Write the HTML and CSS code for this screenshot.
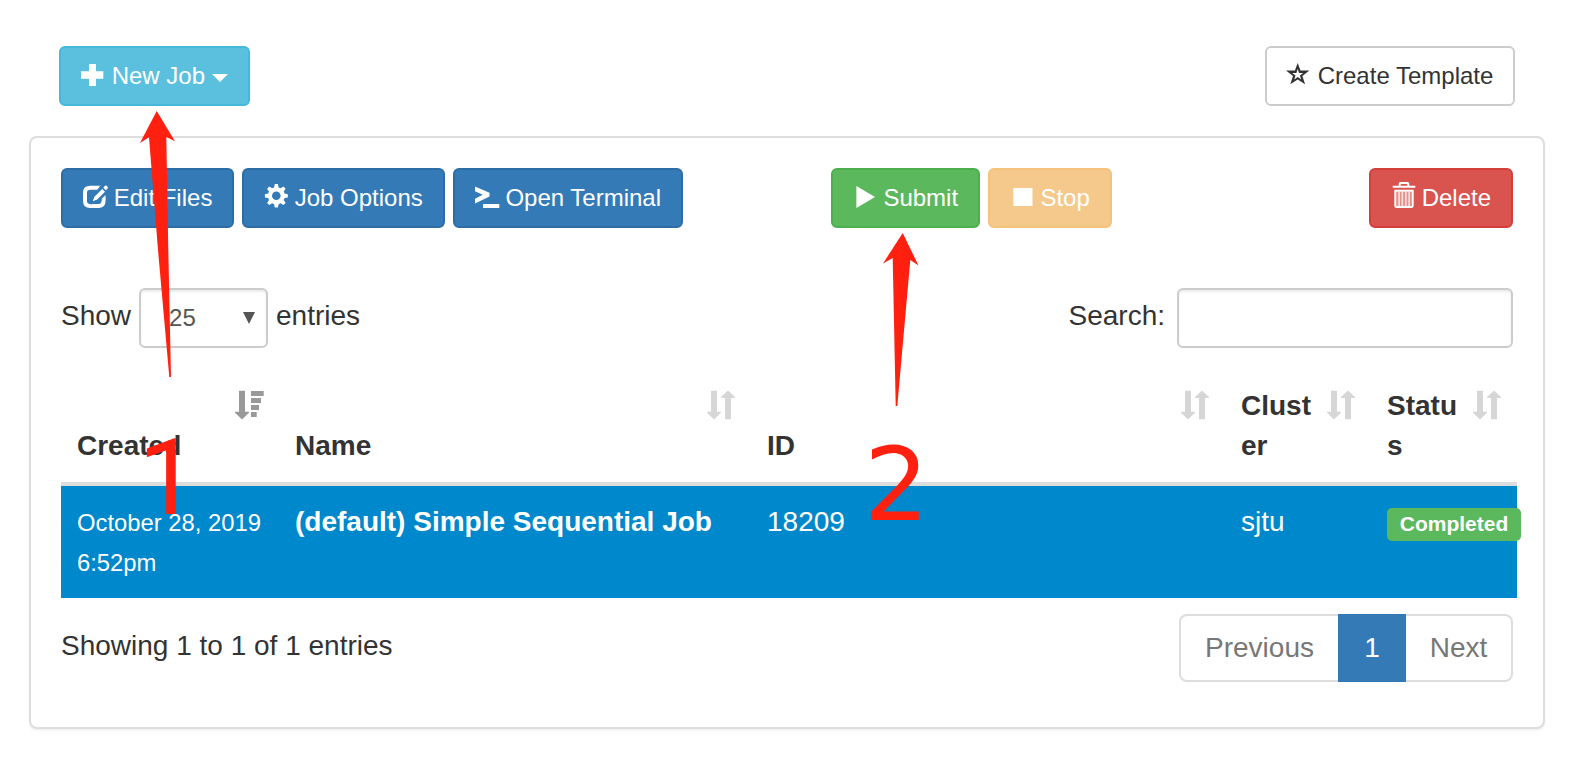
FILE: index.html
```html
<!DOCTYPE html>
<html lang="en">
<head>
<meta charset="utf-8">
<title>Jobs</title>
<link rel="stylesheet" href="styles.css">
</head>
<body>
<main class="page">
  <div class="topbar">
    <button class="btn btn-info new-job"><svg class="icon" viewBox="0 0 24 24"><path d="M8 0h7v7.300h7.300v7.400H15V22H8v-7.300H0V7.300h8z"/></svg><span>New Job</span><i class="caret"></i></button>
    <button class="btn btn-default create-template"><svg class="icon" viewBox="0 0 24 24"><path fill-rule="evenodd" d="M10.700-1L13.500 6.600H22.400L15.400 12 18.100 20.300 10.700 15.600 3.300 20.300 6 12-1 6.600H7.900zM10.700 5L12 9H16.200L12.900 11.600 14.200 15.400 10.700 13.100 7.200 15.400 8.500 11.600 5.200 9H9.400z"/></svg><span>Create Template</span></button>
  </div>

  <section class="panel">
    <div class="toolbar">
      <button class="btn btn-primary edit-files"><svg class="icon" viewBox="0 0 24 24"><path d="M18.500 1.700H7Q2 1.700 2 6.700v8.300q0 5 5 5h8.500q5 0 5-5v-3" fill="none" stroke="currentColor" stroke-width="4"/><path fill="#337ab7" d="M17.300-.400h7v9l-1.800 2-6.500 6.400-8.500 1.500 1-6.500z"/><path d="M9.800 15.300l1.600-4.500 7.800-7.800 2.800 2.800-7.800 7.800zM20.300 1.700l1.700-1.900q.8-.8 1.600 0l1 1.100q.8.800 0 1.600l-1.700 1.700z"/><path d="M18.500 13l4-4v4.500h-4z"/></svg><span>Edit Files</span></button>
      <button class="btn btn-primary job-options"><svg class="icon" viewBox="0 0 24 24"><path fill-rule="evenodd" d="M10.800-2h3.100l.7 3.400 2 .9 2.900-1.800 2.100 2.200-1.900 2.800.9 2 3.200.7v3.200l-3.200.7-.9 2 1.900 2.800-2.100 2.200-2.900-1.800-2 .9-.7 3.400h-3.100l-.7-3.400-2-.9-2.900 1.800-2.100-2.200L5 14.100l-.9-2-3.200-.7V8.200l3.200-.7.9-2-1.900-2.800L5.200.500l2.900 1.800 2-.9zM12.300 5.500a4.300 4.300 0 100 8.600 4.300 4.300 0 000-8.600z"/></svg><span>Job Options</span></button>
      <button class="btn btn-primary open-terminal"><svg class="icon" viewBox="0 0 24 24"><path d="M0 .600l14.500 6.200v3.800L0 17.500v-4.800l7.700-3.900L0 5.300zM8 18h16.300v4H8z"/></svg><span>Open Terminal</span></button>
      <button class="btn btn-success submit"><svg class="icon" viewBox="0 0 24 24"><path d="M3.400 0L22 11 3.400 22z"/></svg><span>Submit</span></button>
      <button class="btn btn-warning stop"><svg class="icon" viewBox="0 0 24 24"><path d="M3.300 2h19.200v18H3.300z"/></svg><span>Stop</span></button>
      <button class="btn btn-danger delete"><svg class="icon" viewBox="0 0 24 24"><path fill-rule="evenodd" d="M7.700-.300v-2Q7.700-4 9.300-4h7.400q1.600 0 1.600 1.700v2h6v2H1.700v-2zM9.700-2v1.700h6.600V-2zM3.300 3.700h19.400v16.100q0 2.200-2.200 2.200h-15q-2.200 0-2.200-2.200zM5.300 5.700V20h15.400V5.700z"/><path fill-opacity=".35" d="M5.300 5.700h15.400V20H5.300z"/><path fill-opacity=".7" d="M7.300 5.700H9V20H7.300zM10.500 5.700h1.700V20h-1.700zM14 5.700h1.700V20H14zM17.300 5.700H19V20h-1.700z"/></svg><span>Delete</span></button>
    </div>

    <div class="filters">
      <span class="label-text">Show</span>
      <div class="field select"><span>25</span><svg class="select-arrow" viewBox="0 0 12 12"><path d="M0 0h12L6 12z"/></svg></div>
      <span class="label-text">entries</span>
      <label class="label-text search-label" for="search">Search:</label>
      <input class="field search" id="search" type="text">
    </div>

    <table class="jobs">
      <colgroup><col class="c-created"><col class="c-name"><col class="c-id"><col class="c-cluster"><col class="c-status"></colgroup>
      <thead>
        <tr>
          <th>Created<svg class="sort active" viewBox="0 0 28 30"><path d="M4 .700h6V21.700h4v1L7 29.500 0 22.700v-1h4zM16 1h12.700v5H16zM16 8h10v5H16zM16 15h8v5h-8zM16 22h5.700v5H16z"/></svg></th>
          <th>Name<svg class="sort" viewBox="0 0 28 30"><path d="M4 .700h6V21.700h4v1L7 29.500 0 22.700v-1h4zM21 .500l7 6.600v1h-4V29.300h-6V8.100h-4v-1z"/></svg></th>
          <th>ID<svg class="sort" viewBox="0 0 28 30"><path d="M4 .700h6V21.700h4v1L7 29.500 0 22.700v-1h4zM21 .500l7 6.600v1h-4V29.300h-6V8.100h-4v-1z"/></svg></th>
          <th>Cluster<svg class="sort" viewBox="0 0 28 30"><path d="M4 .700h6V21.700h4v1L7 29.500 0 22.700v-1h4zM21 .500l7 6.600v1h-4V29.300h-6V8.100h-4v-1z"/></svg></th>
          <th>Status<svg class="sort" viewBox="0 0 28 30"><path d="M4 .700h6V21.700h4v1L7 29.500 0 22.700v-1h4zM21 .500l7 6.600v1h-4V29.300h-6V8.100h-4v-1z"/></svg></th>
        </tr>
      </thead>
      <tbody>
        <tr>
          <td class="date">October 28, 2019 6:52pm</td>
          <td class="name">(default) Simple Sequential Job</td>
          <td>18209</td>
          <td>sjtu</td>
          <td class="status"><span class="badge">Completed</span></td>
        </tr>
      </tbody>
    </table>

    <div class="footer">
      <span class="info">Showing 1 to 1 of 1 entries</span>
      <nav class="pagination"><a class="prev">Previous</a><a class="current">1</a><a class="next">Next</a></nav>
    </div>
  </section>
</main>

<svg class="arrows" viewBox="0 0 1579 764">
  <path d="M156.700 111L175 141.200l-8.700-4.200 2 113 2.700 127h-1.700L158 250l-9-112.700-9 5.700z"/>
  <path d="M902.700 233l15.800 32.500-8.200-5.500-13 146h-1.600l-3-148-9.700 5.500z"/>
</svg>
<span class="step step-one">1</span>
<span class="step step-two">2</span>
</body>
</html>
```
FILE: styles.css
```css
* { box-sizing: border-box; }

body {
  margin: 0;
  background: #fff;
  color: #333;
  font: 28px/40px "Liberation Sans", Arial, sans-serif;
}

.page {
  position: relative;
  width: 1579px;
  height: 764px;
  padding: 46px 34px 0 29px;
  overflow: hidden;
}

.topbar {
  display: flex;
  justify-content: space-between;
  padding: 0 30px;
  margin-bottom: 30px;
}

.btn {
  display: flex;
  align-items: center;
  height: 60px;
  padding: 0 0 0 20px;
  border: 2px solid;
  border-radius: 6px;
  color: #fff;
  font: 24px/36px "Liberation Sans", Arial, sans-serif;
  white-space: nowrap;
}

.icon {
  flex: none;
  width: 24px;
  height: 24px;
  margin-right: 6.7px;
  overflow: visible;
  fill: currentColor;
}

.open-terminal .icon,
.submit .icon,
.stop .icon { margin-right: 6.4px; }

.btn-info { background: #5bc0de; border-color: #46b8da; }
.btn-default { background: #fff; border-color: #ccc; color: #333; }
.btn-primary { background: #337ab7; border-color: #2e6da4; }
.btn-success { background: #5cb85c; border-color: #4cae4c; }
.btn-warning { background: #f0ad4e; border-color: #eea236; opacity: .65; }
.btn-danger { background: #d9534f; border-color: #d43f3a; }

.caret {
  margin: 3px 0 0 7px;
  border-top: 8px solid;
  border-right: 8px solid transparent;
  border-left: 8px solid transparent;
}

.new-job { width: 191px; }
.create-template { width: 250px; }
.edit-files { width: 173px; }
.job-options { width: 203px; }
.open-terminal { width: 230px; }
.submit { width: 149px; margin-left: 140px; }
.stop { width: 124px; }
.delete { width: 144px; margin-left: auto; }

.panel {
  height: 593px;
  padding: 30px;
  border: 2px solid #ddd;
  border-radius: 8px;
  box-shadow: 0 2px 2px rgba(0, 0, 0, .05);
}

.toolbar {
  display: flex;
  gap: 8px;
}

.filters {
  display: flex;
  align-items: center;
  margin: 60px 0 22px;
}

.label-text { padding-bottom: 4px; }

.field {
  height: 60px;
  border: 2px solid #ccc;
  border-radius: 6px;
  background: #fff;
  box-shadow: inset 0 2px 2px rgba(0, 0, 0, .075);
  color: #555;
  font: 24px/36px "Liberation Sans", Arial, sans-serif;
}

.select {
  display: flex;
  align-items: center;
  justify-content: space-between;
  width: 129px;
  margin: 0 8px;
  padding: 0 11px 0 28px;
}

.select-arrow { width: 12px; height: 12px; margin-bottom: 1px; fill: #555; }
.search-label { margin-left: auto; }
.search { width: 336px; margin-left: 12px; }

.jobs {
  width: 1456px;
  table-layout: fixed;
  border-collapse: separate;
  border-spacing: 0;
}

.c-created { width: 218px; }
.c-name { width: 472px; }
.c-id { width: 474px; }
.c-cluster { width: 146px; }
.c-status { width: 146px; }

.jobs th {
  position: relative;
  padding: 16px 60px 16px 16px;
  border-bottom: 4px solid #ddd;
  text-align: left;
  vertical-align: bottom;
  word-break: break-all;
}

.sort {
  position: absolute;
  top: 20px;
  right: 16px;
  width: 28px;
  height: 30px;
  overflow: visible;
  fill: #d6d6d6;
}

.sort.active { fill: #999; }

.jobs td {
  height: 112px;
  padding: 16px;
  background: #0088cc;
  color: #fff;
  vertical-align: top;
}

.jobs .date {
  padding: 17px 8px 15px 16px;
  font-size: 23.8px;
}

.jobs .name { font-weight: bold; }

.badge {
  display: block;
  width: 134px;
  height: 33px;
  margin-top: 6px;
  border-radius: 5px;
  background: #5cb85c;
  font: bold 21px/32px "Liberation Sans", Arial, sans-serif;
  text-align: center;
}

.footer {
  display: flex;
  justify-content: space-between;
  padding-top: 16px;
}

.info { padding-top: 12px; }

.pagination {
  display: flex;
  width: 334px;
  height: 68px;
  border: 2px solid #ddd;
  border-radius: 8px;
  color: #777;
  line-height: 64px;
  text-align: center;
}

.prev { width: 157px; }
.next { flex: 1; }

.current {
  width: 68px;
  margin: -2px 0;
  background: #337ab7;
  color: #fff;
  line-height: 68px;
}

.arrows {
  position: absolute;
  top: 0;
  left: 0;
  width: 1579px;
  height: 764px;
  fill: #ff2010;
  pointer-events: none;
}

.step {
  position: absolute;
  color: #ff2010;
  line-height: 120px;
}

.step-one {
  top: 418px;
  left: 138px;
  font-family: Roboto, sans-serif;
  font-size: 106px;
}

.step-two {
  top: 425px;
  left: 864px;
  font-family: "DejaVu Sans", sans-serif;
  font-size: 102px;
}
```
